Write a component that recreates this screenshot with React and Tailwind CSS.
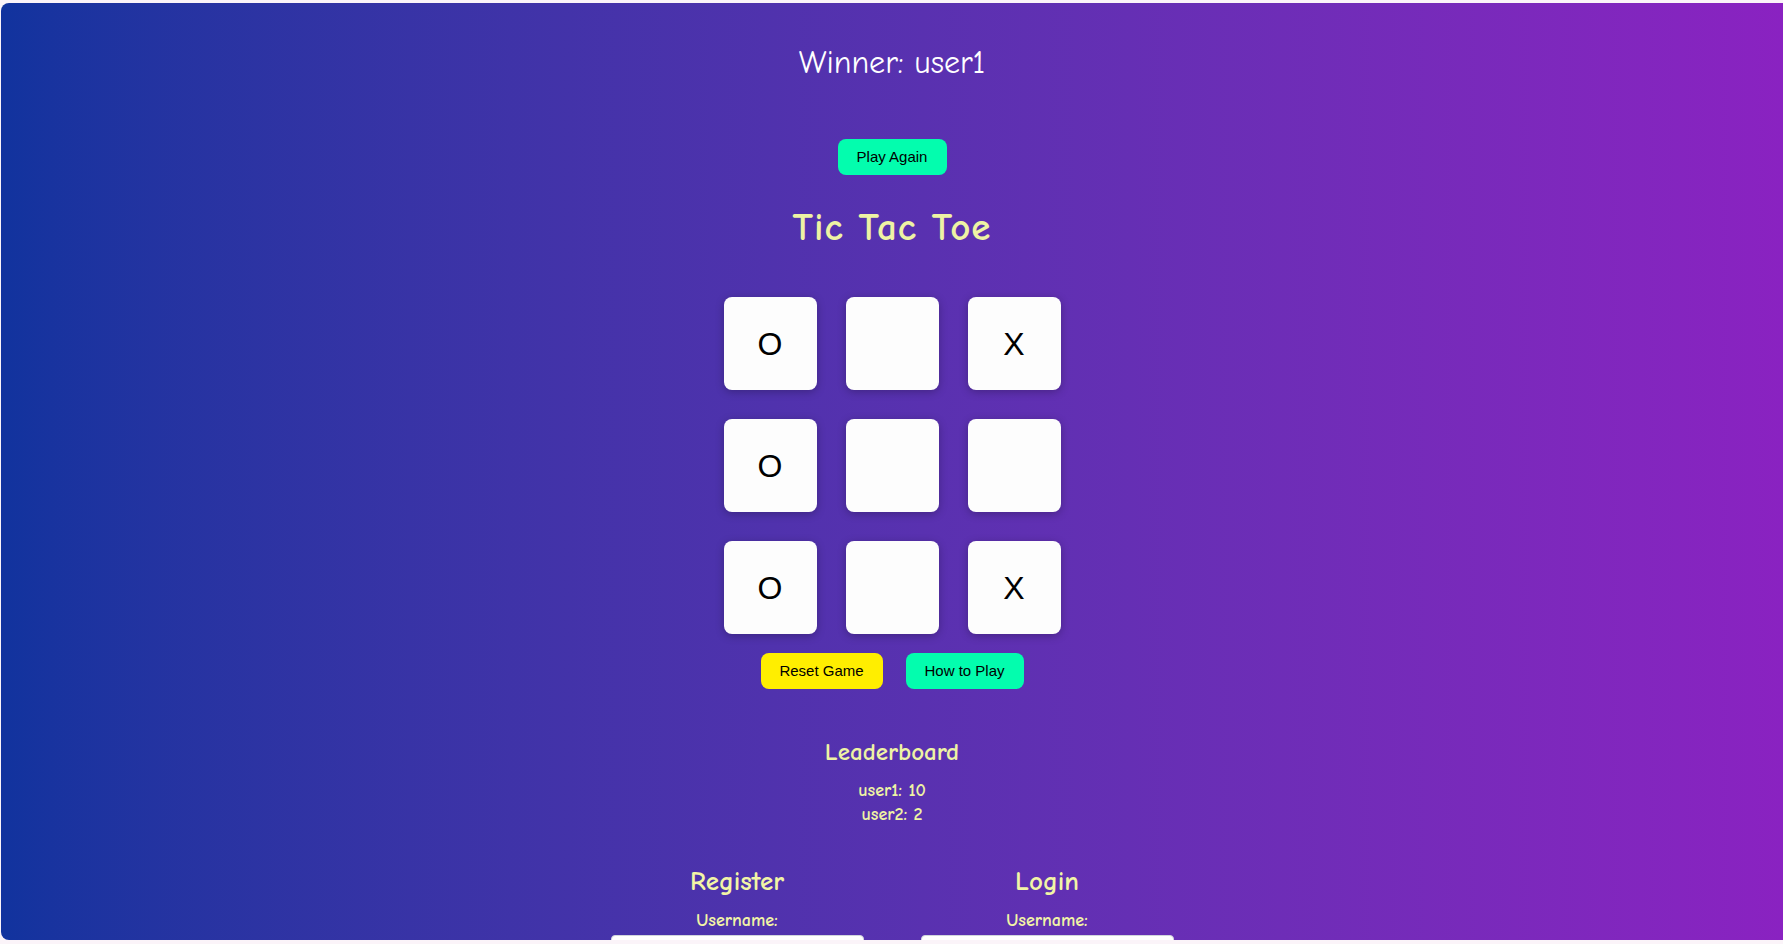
const board = ["O", "", "X", "O", "", "", "O", "", "X"];

const leaders = [
  { name: "user1", score: 10 },
  { name: "user2", score: 2 },
];

const comic = "font-['Comic_Sans_MS','Comic_Neue','DejaVu_Sans',sans-serif]";
const arial = "font-['Liberation_Sans',Arial,sans-serif]";

function Cell({ value }) {
  return (
    <button
      className={`w-[93px] h-[93px] bg-[#fdfdfd] rounded-lg shadow-[0_2px_8px_rgba(0,0,0,0.25)] flex items-center justify-center text-[32px] text-black ${arial}`}>
      {value}
    </button>
  );
}

function AuthForm({ title }) {
  return (
    <div className="w-[253px] flex flex-col items-center">
      <h3 className={`text-[27px] leading-[30px] font-bold text-[#f2f5a6] ${comic}`}>
        {title}
      </h3>
      <label className={`mt-[14px] text-[18px] leading-[20px] font-bold text-[#f2f5a6] ${comic}`}>
        Username:
      </label>
      <input className="mt-[4px] w-[253px] h-[30px] bg-white rounded border border-gray-300" />
    </div>
  );
}

export default function App() {
  return (
    <div className="min-h-screen bg-[#fbf4f9] pt-[3px] pl-[1px]">
      <div className="h-[937px] overflow-hidden rounded-l-lg bg-gradient-to-r from-[#11339e] to-[#8a22c1]">
        <div className="flex flex-col items-center pt-[42px]">
          {/* Winner */}
          <h2 className={`text-[32px] leading-[36px] text-white ${comic}`}>
            Winner: user1
          </h2>
          <button
            className={`mt-[58px] w-[109px] h-[36px] rounded-lg bg-[#03fdae] text-[15px] text-black ${arial}`}>
            Play Again
          </button>

          {/* Title */}
          <h1 className={`mt-[31px] text-[39px] leading-[44px] font-bold tracking-wide text-[#eef3a4] ${comic}`}>
            Tic Tac Toe
          </h1>

          {/* Board */}
          <div className="mt-[47px] grid grid-cols-3 gap-[29px]">
            {board.map((v, i) => (
              <Cell key={i} value={v} />
            ))}
          </div>

          {/* Controls */}
          <div className="mt-[19px] flex gap-[23px]">
            <button
              className={`w-[122px] h-[36px] rounded-lg bg-[#ffee00] text-[15px] text-black ${arial}`}>
              Reset Game
            </button>
            <button
              className={`w-[118px] h-[36px] rounded-lg bg-[#03fdae] text-[15px] text-black ${arial}`}>
              How to Play
            </button>
          </div>

          {/* Leaderboard */}
          <h3 className={`mt-[48px] text-[25px] leading-[30px] font-bold text-[#eef3a4] ${comic}`}>
            Leaderboard
          </h3>
          <ul className={`mt-[12px] text-center text-[18px] leading-[24px] font-bold text-[#eef3a4] ${comic}`}>
            {leaders.map((l) => (
              <li key={l.name}>
                {l.name}: {l.score}
              </li>
            ))}
          </ul>

          {/* Auth */}
          <div className="mt-[40px] w-full flex justify-center gap-[57px]">
            <AuthForm title="Register" />
            <AuthForm title="Login" />
          </div>
        </div>
      </div>
    </div>
  );
}
